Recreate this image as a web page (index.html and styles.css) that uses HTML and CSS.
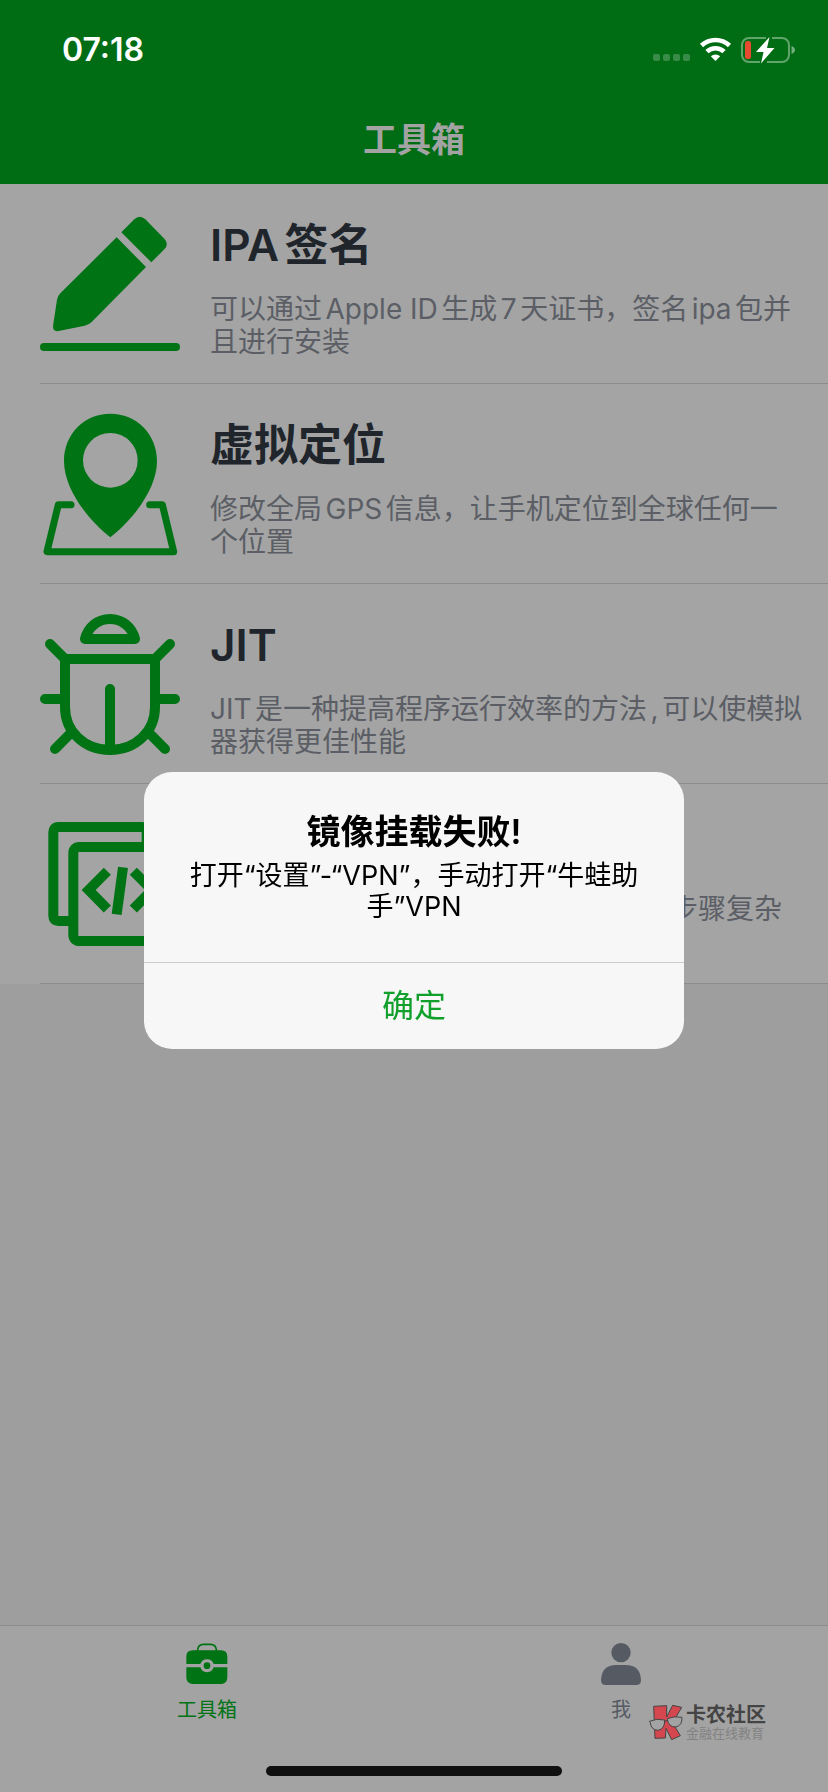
FILE: index.html
```
<!DOCTYPE html>
<html lang="zh-CN">
<head>
<meta charset="utf-8">
<meta name="viewport" content="width=device-width, initial-scale=1">
<title>工具箱</title>
<link rel="stylesheet" href="styles.css">
</head>
<body>
<div class="app">
  <header class="header">
    <div class="status">
      <time class="clock">07:18</time>
      <svg class="status-icons" viewBox="0 0 144 28" aria-hidden="true">
        <g fill="#fff" opacity=".22">
          <rect x="1" y="18" width="7" height="7" rx="2"/><rect x="11" y="18" width="7" height="7" rx="2"/><rect x="21" y="18" width="7" height="7" rx="2"/><rect x="31" y="18" width="7" height="7" rx="2"/>
        </g>
        <g fill="none" stroke="#fff" stroke-width="4.6">
          <path d="M49.500 9.500a20.500 20.500 0 0 1 28 0"/>
          <path d="M55 15.700a12.300 12.300 0 0 1 17 0"/>
        </g>
        <path d="M58.800 20.200a7 7 0 0 1 9.400 0l-4.700 4.900z" fill="#fff"/>
        <path d="M114 2H97a7 7 0 0 0-7 7v10a7 7 0 0 0 7 7h11M120 2h10a7 7 0 0 1 7 7v10a7 7 0 0 1-7 7h-15" fill="none" stroke="#fff" stroke-opacity=".38" stroke-width="2"/>
        <path d="M139.500 10q3.500 1.500 3.500 4t-3.500 4z" fill="#fff" fill-opacity=".45"/>
        <rect x="93" y="5" width="6" height="18" rx="2.500" fill="#e84a31"/>
        <path d="M117.500 1 104 16h7.500L109 27.500 122.500 12H115z" fill="#fff"/>
      </svg>
    </div>
    <h1 class="nav-title">工具箱</h1>
  </header>

  <main class="content">
    <ul class="tools">
      <li class="tool">
        <svg class="tool-icon" viewBox="60 60 420 450" fill="#007315" aria-hidden="true">
          <path d="M290 142 378 231 215 396Q206 405 194 407L116 423Q98 426 99 408L111 329Q113 318 121 310z"/>
          <path d="M304 127 343 88Q359 73 376 88L433 146Q448 162 433 178L394 217z"/>
          <rect x="60" y="459" width="420" height="24" rx="12"/>
        </svg>
        <div class="tool-text">
          <h2 class="tool-title">IPA签名</h2>
          <p class="tool-desc">可以通过Apple ID生成7天证书，签名ipa包并且进行安装</p>
        </div>
      </li>
      <li class="tool">
        <svg class="tool-icon" viewBox="60 60 420 450" aria-hidden="true">
          <path fill="#007315" fill-rule="evenodd" d="M271 71C193 71 132 132 132 213C132 303 213 397 271 442C329 397 411 303 411 213C411 132 349 71 271 71zM271 129a82 82 0 1 1 0 164a82 82 0 0 1 0-164z"/>
          <path d="M153 344H115L81 485H461L427 344H389" fill="none" stroke="#007315" stroke-width="21" stroke-linecap="round" stroke-linejoin="round"/>
        </svg>
        <div class="tool-text">
          <h2 class="tool-title">虚拟定位</h2>
          <p class="tool-desc">修改全局GPS信息，让手机定位到全球任何一个位置</p>
        </div>
      </li>
      <li class="tool">
        <svg class="tool-icon" viewBox="60 60 420 450" fill="none" stroke="#007315" stroke-width="30" stroke-linecap="round" stroke-linejoin="round" aria-hidden="true">
          <path d="M195 147H345C336 111 306 87 270 87S204 111 195 147z"/>
          <path d="M135 207H405V350C405 425 347 480 270 480S135 425 135 350z"/>
          <path d="M270 297V476M90 162 135 207M450 162 405 207M75 327H130M465 327H410M105 477 152 430M435 477 388 430"/>
        </svg>
        <div class="tool-text">
          <h2 class="tool-title">JIT</h2>
          <p class="tool-desc">JIT是一种提高程序运行效率的方法,可以使模拟器获得更佳性能</p>
        </div>
      </li>
      <li class="tool">
        <svg class="tool-icon" viewBox="60 60 420 450" fill="none" stroke="#007315" stroke-width="30" aria-hidden="true">
          <path d="M150 393H115Q100 393 100 378V127Q100 111 115 111H365Q380 111 380 127V160"/>
          <rect x="160" y="171" width="280" height="282" rx="17"/>
          <path d="M262 244 206 300 262 357M340 244 396 300 340 357M309 232 290 373"/>
        </svg>
        <div class="tool-text">
          <p class="tool-desc tool-desc-tail">步骤复杂</p>
        </div>
      </li>
    </ul>
  </main>

  <nav class="tabbar">
    <div class="tabs">
      <button class="tab tab-active" type="button" aria-current="page">
        <svg class="tab-icon" viewBox="105 96 132 132" aria-hidden="true">
          <path d="M143 124V119Q145 103 160 103H182Q197 103 199 119V124" fill="none" stroke="#007315" stroke-width="5"/>
          <path d="M129 121H213Q232 121 232 140V162H191A21 21 0 0 0 151 162H109V140Q109 121 129 121zM109 172H151A21 21 0 0 0 191 172H232V202Q232 222 213 222H129Q109 222 109 202z" fill="#007315"/>
          <circle cx="171" cy="167" r="10" fill="#007315"/>
        </svg>
        <span>工具箱</span>
      </button>
      <button class="tab" type="button">
        <svg class="tab-icon" viewBox="54 96 132 132" fill="#555a63" aria-hidden="true">
          <circle cx="120" cy="128" r="29"/>
          <path d="M60 210Q62 165 106 165H134Q178 165 180 210Q180 225 166 225H74Q60 225 60 210z"/>
        </svg>
        <span>我</span>
      </button>
    </div>
    <div class="home-indicator"></div>
    <div class="watermark">
      <svg class="watermark-logo" viewBox="202 282 108 111" aria-hidden="true">
        <g fill="#d4474f" stroke="#444" stroke-width="3" stroke-linejoin="round">
          <path d="M219 289 258 287V321L276 286 303 292 276 339 299 377 273 389 256 355 254 384 223 385z"/>
        </g>
        <g fill="#a3a3a3" stroke="#444" stroke-width="3">
          <path d="M206 334Q228 324 252 330Q253 357 232 361Q211 360 209 338z"/>
          <path d="M260 326Q282 317 304 322Q305 346 286 351Q264 352 260 328z"/>
          <path d="M252 334 261 331" fill="none"/>
        </g>
      </svg>
      <div class="watermark-text">
        <strong>卡农社区</strong>
        <small>金融在线教育</small>
      </div>
    </div>
  </nav>
</div>

<div class="overlay">
  <section class="alert" role="alertdialog" aria-modal="true" aria-labelledby="alert-title" aria-describedby="alert-message">
    <div class="alert-body">
      <h2 class="alert-title" id="alert-title">镜像挂载失败!</h2>
      <p class="alert-message" id="alert-message">打开“设置”-“VPN”，手动打开“牛蛙助手”VPN</p>
    </div>
    <button class="alert-button" type="button">确定</button>
  </section>
</div>
</body>
</html>
```
FILE: styles.css
```
* {
  box-sizing: border-box;
}

body,
h1,
h2,
p,
ul {
  margin: 0;
  padding: 0;
}

body,
button {
  font-family: Inter, "Noto Sans CJK SC", sans-serif;
  text-autospace: normal;
}

button {
  border: 0;
  background: none;
  padding: 0;
}

.app {
  display: flex;
  flex-direction: column;
  min-height: 100vh;
  background: #9e9e9e;
}

.header {
  background: #006c13;
}

.status {
  display: flex;
  justify-content: space-between;
  align-items: center;
  height: 96px;
  padding: 4px 32px 0 62px;
}

.clock {
  font-size: 32px;
  font-weight: 600;
  line-height: 40px;
  color: #fff;
}

.status-icons {
  width: 144px;
  height: 28px;
}

.nav-title {
  height: 88px;
  font-size: 34px;
  font-weight: 600;
  line-height: 88px;
  text-align: center;
  color: #a3a3a3;
}

.content {
  flex: 1;
}

.tools {
  list-style: none;
  padding-left: 40px;
  background: #a4a4a4;
}

.tool {
  display: flex;
  gap: 30px;
  padding: 26px 24px 23px 0;
  border-bottom: 1px solid #8c8c8e;
}

.tool-icon {
  flex: none;
  width: 140px;
  height: 150px;
}

.tool-text {
  flex: 1;
  display: flex;
  flex-direction: column;
  gap: 21px;
  padding-top: 8px;
}

.tool-title {
  font-size: 44px;
  font-weight: 600;
  line-height: 54px;
  color: #20252c;
}

.tool-desc {
  font-size: 28px;
  line-height: 33px;
  color: #5b5e65;
}

.tool-desc-tail {
  padding-top: 75px;
  padding-right: 22px;
  text-align: right;
}

.tabbar {
  position: relative;
  border-top: 1px solid #8c8c8e;
  background: #a3a3a3;
}

.tabs {
  display: flex;
}

.tab {
  flex: 1;
  display: flex;
  flex-direction: column;
  align-items: center;
  gap: 10px;
  padding-top: 16px;
  font-size: 20px;
  line-height: 28px;
  color: #555a63;
}

.tab-active {
  color: #007315;
}

.tab-icon {
  width: 44px;
  height: 44px;
}

.home-indicator {
  width: 296px;
  height: 10px;
  margin: 42px auto 16px;
  border-radius: 5px;
  background: #101010;
}

.watermark {
  position: absolute;
  top: 78px;
  right: 62px;
  display: flex;
  gap: 2px;
}

.watermark-logo {
  width: 36px;
  height: 37px;
}

.watermark-text {
  display: flex;
  flex-direction: column;
}

.watermark-text strong {
  font-size: 20px;
  font-weight: 700;
  line-height: 22px;
  color: #444;
}

.watermark-text small {
  font-size: 13px;
  line-height: 14px;
  color: #828282;
}

.overlay {
  position: fixed;
  inset: 0;
  display: flex;
  align-items: center;
  justify-content: center;
  padding: 28px 16px 0;
}

.alert {
  width: 100%;
  max-width: 540px;
  overflow: hidden;
  border-radius: 28px;
  background: #f7f7f7;
  text-align: center;
  text-autospace: no-autospace;
  color: #000;
}

.alert-body {
  padding: 39px 36px 40px;
}

.alert-title {
  font-size: 34px;
  font-weight: 600;
  line-height: 42px;
}

.alert-message {
  margin-top: 7px;
  font-size: 27px;
  line-height: 31px;
}

.alert-button {
  display: block;
  width: 100%;
  border-top: 1px solid #cbcbd0;
  font-size: 32px;
  line-height: 86px;
  color: #12a02c;
}
```
